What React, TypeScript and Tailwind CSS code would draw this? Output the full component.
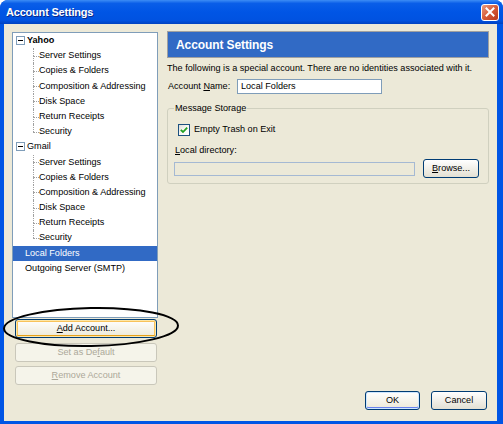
const treeLine = "border-dotted border-[#a0a0a0]";

const MinusBox = () => (
	<div className="w-[9px] h-[9px] shrink-0 border border-[#7f9db9] bg-white flex items-center justify-center">
		<div className="w-[5px] h-[1px] bg-black" />
	</div>
);

const ChildRow = (props: { label: string; last?: boolean }) => (
	<div className="flex h-[15.2px] items-stretch">
		<div className="w-[20px] shrink-0" />
		<div className="w-[6px] shrink-0 flex flex-col">
			<div className={`h-1/2 border-l ${treeLine}`} />
			<div
				className={`flex-1 border-t ${treeLine} ${props.last ? "" : `border-l`}`}
			/>
		</div>
		<span className="flex items-center whitespace-nowrap">{props.label}</span>
	</div>
);

const TreeAccount = (props: { name: string; bold?: boolean }) => {
	const children = [
		"Server Settings",
		"Copies & Folders",
		"Composition & Addressing",
		"Disk Space",
		"Return Receipts",
		"Security",
	];
	return (
		<>
			<div className="flex h-[15.2px] items-center pl-[3px] gap-[2px]">
				<MinusBox />
				<span className={props.bold ? "font-bold" : ""}>{props.name}</span>
			</div>
			{children.map((c, i) => (
				<ChildRow key={i} label={c} last={i === children.length - 1} />
			))}
		</>
	);
};

const XpButton = (props: {
	children: React.ReactNode;
	className?: string;
	variant?: "normal" | "hover" | "default" | "disabled";
}) => {
	const v = props.variant || "normal";
	const look =
		v === "disabled"
			? "border-[#c9c7ba] bg-[#f5f4ea] text-[#aca899]"
			: v === "hover"
				? "border-[#003c74] bg-gradient-to-b from-white to-[#ece9d8] shadow-[inset_0_0_0_1px_#fde7a8,inset_0_-2px_0_#e5a01a,inset_0_0_0_2px_#f8c35b]"
				: v === "default"
					? "border-[#003c74] bg-gradient-to-b from-white to-[#ece9d8] shadow-[inset_0_0_0_1px_#cee7ff,inset_0_-1px_0_1px_#6982ee]"
					: "border-[#003c74] bg-gradient-to-b from-white to-[#e3e0d3]";
	return (
		<div
			className={`h-[19px] rounded-[3px] border flex items-center justify-center ${look} ${props.className || ""}`}
		>
			{props.children}
		</div>
	);
};

export default function App() {
	return (
		<div className="relative w-[503px] h-[424px] bg-[#0055e5] rounded-t-[8px] flex flex-col overflow-hidden font-['Liberation_Sans',Arial,sans-serif] text-[9.1px] text-black leading-none">
			{/* title bar */}
			<div className="h-[24px] shrink-0 flex items-center justify-between pl-[6px] pr-[4px] bg-[linear-gradient(to_bottom,#3d8df5_0%,#0a5ee8_14%,#0055e5_50%,#0052e0_85%,#0042c0_100%)]">
				<span className="text-white font-bold text-[11px] tracking-[-0.2px] [text-shadow:1px_1px_0_#0a2a8a]">
					Account Settings
				</span>
				<div className="w-[18px] h-[17px] rounded-[3px] border border-white bg-gradient-to-br from-[#e99c7f] via-[#d65a36] to-[#b8381a] flex items-center justify-center">
					<svg width="10" height="10" viewBox="0 0 10 10">
						<path
							d="M1.5 1.5 L8.5 8.5 M8.5 1.5 L1.5 8.5"
							stroke="white"
							strokeWidth="2"
							strokeLinecap="square"
						/>
					</svg>
				</div>
			</div>

			{/* body */}
			<div className="ml-[4px] mr-[6px] mb-[3px] flex-1 bg-[#ece9d8] flex flex-col">
				<div className="flex flex-1 pt-[7px] pl-[8px] gap-[9px]">
					{/* left column */}
					<div className="w-[146px] flex flex-col">
						<div className="mt-[1px] h-[286px] border border-[#7f9db9] bg-white">
							<TreeAccount name="Yahoo" bold />
							<TreeAccount name="Gmail" />
							<div className="h-[15.2px] flex items-center pl-[12px] bg-[#316ac5] text-white">
								Local Folders
							</div>
							<div className="h-[15.2px] flex items-center pl-[12px]">
								Outgoing Server (SMTP)
							</div>
						</div>
						<XpButton variant="hover" className="mt-[1px] ml-[3px] w-[142px]">
							<span>
								<u>A</u>dd Account...
							</span>
						</XpButton>
						<XpButton variant="disabled" className="mt-[5px] ml-[3px] w-[142px]">
							<span>
								Set as De<u>f</u>ault
							</span>
						</XpButton>
						<XpButton variant="disabled" className="mt-[4px] ml-[3px] w-[142px]">
							<span>
								<u>R</u>emove Account
							</span>
						</XpButton>
					</div>

					{/* right column */}
					<div className="w-[322px] flex flex-col">
						<div className="h-[27px] border border-[#a0a0a0] bg-[#316ac5] flex items-center pl-[8px]">
							<span className="text-white font-bold text-[12px] tracking-[-0.1px]">
								Account Settings
							</span>
						</div>
						<div className="mt-[5px] h-[12px] flex items-center whitespace-nowrap">
							The following is a special account. There are no identities
							associated with it.
						</div>
						<div className="mt-[4px] flex items-center pl-[1px]">
							<span className="w-[69px]">
								Account <u>N</u>ame:
							</span>
							<div className="w-[145px] h-[15px] border border-[#7f9db9] bg-white flex items-center pl-[3px]">
								Local Folders
							</div>
						</div>
						<fieldset className="mt-[8px] border border-[#d0d0bf] rounded-[3px] px-[6px] pb-[5px]">
							<legend className="px-[1px] h-[12px] leading-[12px]">
								Message Storage
							</legend>
							<div className="mt-[10px] ml-[4px] flex items-center gap-[4px]">
								<div className="w-[12px] h-[12px] border border-[#1c5180] bg-gradient-to-br from-[#dcdcd7] via-[#f8f8f5] to-white flex items-center justify-center">
									<svg width="8" height="8" viewBox="0 0 8 8">
										<path
											d="M0.8 3.8 L3 6 L7.2 1.6"
											fill="none"
											stroke="#21a121"
											strokeWidth="1.8"
										/>
									</svg>
								</div>
								<span>Empty Trash on Exit</span>
							</div>
							<div className="mt-[10px] ml-[1px]">
								<u>L</u>ocal directory:
							</div>
							<div className="mt-[4px] flex items-center gap-[8px]">
								<div className="w-[241px] h-[14px] border border-[#a5b9d3] bg-[#ece9d8]" />
								<XpButton className="w-[56px]">
									<span>
										<u>B</u>rowse...
									</span>
								</XpButton>
							</div>
						</fieldset>
					</div>
				</div>

				{/* bottom buttons */}
				<div className="flex justify-end gap-[11px] pr-[10px] pb-[11px]">
					<XpButton variant="default" className="w-[55px]">
						OK
					</XpButton>
					<XpButton className="w-[56px]">Cancel</XpButton>
				</div>
			</div>

			{/* hand-drawn annotation around Add Account */}
			<svg
				className="absolute left-[1px] top-[304px]"
				width="182"
				height="48"
				viewBox="0 0 182 48"
			>
				<ellipse
					cx="90"
					cy="23"
					rx="87"
					ry="19"
					fill="none"
					stroke="black"
					strokeWidth="2"
					transform="rotate(-1 90 23)"
				/>
			</svg>
		</div>
	);
}
